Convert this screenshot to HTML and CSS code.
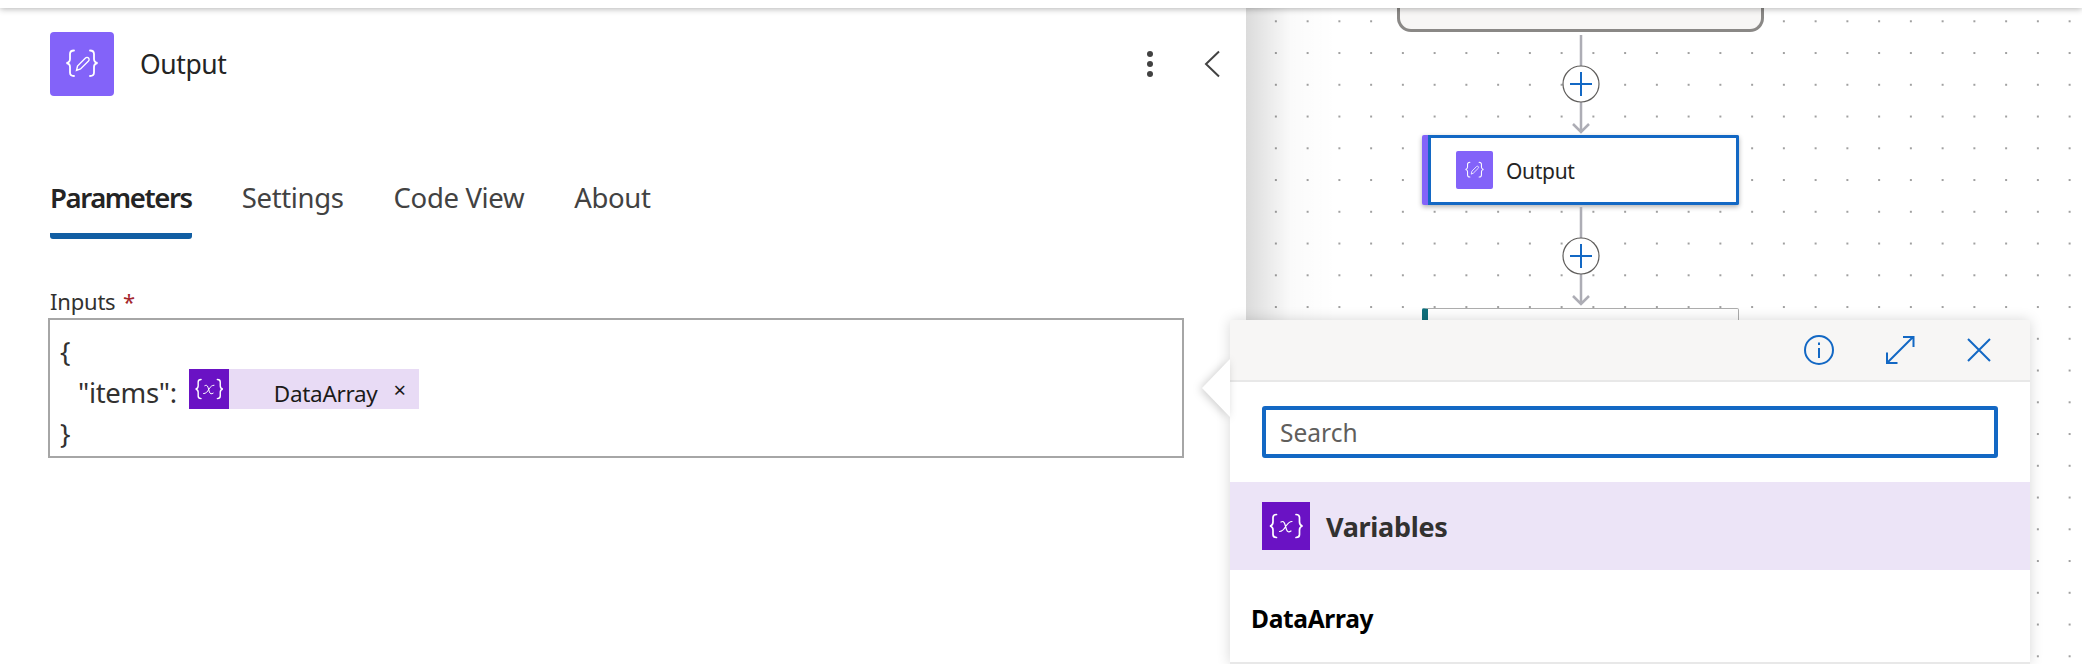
FILE: index.html
```html
<!DOCTYPE html>
<html lang="en">
<head>
  <meta charset="UTF-8"/>
  <title>Output</title>
  <link rel="stylesheet" href="styles.css">
</head>
<body>
  <svg class="defs" width="0" height="0">
    <symbol id="ico-compose" viewBox="0 0 64 64">
      <g fill="none" stroke="#fff" stroke-width="1.800" stroke-linecap="round">
        <path d="M24 18.500c-3 0-4 1-4 3.500v5c0 2.500-1 3.500-3.500 4 2.500.5 3.500 1.500 3.500 4v5.500c0 2.500 1 3.500 4 3.500"/>
        <path d="M40 18.500c3 0 4 1 4 3.500v5c0 2.500 1 3.500 3.500 4-2.500.5-3.500 1.500-3.500 4v5.500c0 2.500-1 3.500-4 3.500"/>
        <path stroke-width="1.400" d="M26.500 38.500l1-4.500 8-8c1-1 2.500-.5 3 0s1 2 0 3l-8 8z"/>
      </g>
    </symbol>
    <symbol id="ico-var" viewBox="0 0 48 48">
      <g fill="none" stroke="#fff" stroke-linecap="round">
        <path stroke-width="1.700" d="M14.500 12.500c-2.500 0-3.500 1-3.500 3v4.500c0 2.500-1 3.500-3 4 2 .5 3 1.500 3 4v4.500c0 2 1 3 3.500 3"/>
        <path stroke-width="1.700" d="M34 12.500c2.500 0 3.500 1 3.500 3v4.500c0 2.500 1 3.500 3 4-2 .5-3 1.500-3 4v4.500c0 2-1 3-3.500 3"/>
        <path stroke-width="1.200" d="M19 20c2-1 3-.5 3.800 2l1.700 5.500c.8 2.500 2.300 3 4.500 1.500M30 19.500c-2.500 0-4 1.500-6 4.500-2 3.500-3.500 5.500-6.500 5.500"/>
      </g>
    </symbol>
  </svg>

  <div class="topbar"></div>

  <div class="app">
    <!-- Panel de la izquierda -->
    <section class="panel">
      <header class="panel-head">
        <span class="op-icon op-icon-lg"><svg><use href="#ico-compose"/></svg></span>
        <h1 class="panel-title">Output</h1>
        <button class="head-btn btn-more" aria-label="More">
          <svg width="10" height="26" viewBox="0 0 10 26"><circle cx="5" cy="3" r="3" fill="#424242"/><circle cx="5" cy="13" r="3" fill="#424242"/><circle cx="5" cy="23" r="3" fill="#424242"/></svg>
        </button>
        <button class="head-btn btn-collapse" aria-label="Collapse">
          <svg width="16" height="28" viewBox="0 0 16 28"><path d="M15 1.500L2 14l13 12.500" fill="none" stroke="#424242" stroke-width="2"/></svg>
        </button>
      </header>

      <nav class="tabs">
        <a class="tab active">Parameters</a>
        <a class="tab">Settings</a>
        <a class="tab">Code View</a>
        <a class="tab">About</a>
      </nav>

      <label class="field-label">Inputs <span class="req">*</span></label>
      <div class="editor">
        <div class="line">{</div>
        <div class="line line-indent">
          <span>"items":</span>
          <span class="chip">
            <span class="chip-icon"><svg><use href="#ico-var"/></svg></span>
            <span class="chip-text">DataArray</span>
            <span class="chip-x">×</span>
          </span>
        </div>
        <div class="line">}</div>
      </div>
    </section>

    <!-- Lienzo -->
    <section class="canvas">
      <div class="flow">
        <div class="node-top"></div>
        <svg class="edge" width="40" height="100" viewBox="0 0 40 100">
          <path d="M20 0v97M12 89l8 8 8-8" fill="none" stroke="#adadb5" stroke-width="2.500"/>
          <circle cx="20" cy="49" r="18" fill="#fff" stroke="#605e5c" stroke-width="1.200"/>
          <path d="M20 37v24M9 49h22" fill="none" stroke="#1368c4" stroke-width="2"/>
        </svg>
        <div class="node node-selected">
          <span class="op-icon op-icon-sm"><svg><use href="#ico-compose"/></svg></span>
          <span class="node-label">Output</span>
        </div>
        <svg class="edge edge-low" width="40" height="100" viewBox="0 0 40 100">
          <path d="M20 0v97M12 89l8 8 8-8" fill="none" stroke="#adadb5" stroke-width="2.500"/>
          <circle cx="20" cy="49" r="18" fill="#fff" stroke="#605e5c" stroke-width="1.200"/>
          <path d="M20 37v24M9 49h22" fill="none" stroke="#1368c4" stroke-width="2"/>
        </svg>
        <div class="node node-next"></div>
      </div>
    </section>
  </div>

  <!-- Selector de contenido dinamico -->
  <aside class="popup">
    <svg class="popup-tail" width="28" height="58" viewBox="0 0 28 58"><path d="M28 0L0 29l28 29z" fill="#fff"/></svg>
    <div class="popup-head">
      <svg width="30" height="30" viewBox="0 0 30 30" fill="none" stroke="#1368c4" stroke-width="2"><circle cx="15" cy="15" r="14"/><path d="M15 13v10M15 7.500v2.500"/></svg>
      <svg width="30" height="30" viewBox="0 0 30 30" fill="none" stroke="#1368c4" stroke-width="2"><path d="M2 28L28 2M18 2h10.500v10M2 17.500V28h10.500"/></svg>
      <svg width="26" height="26" viewBox="0 0 26 26" fill="none" stroke="#1368c4" stroke-width="2"><path d="M2 2l22 22M24 2L2 24"/></svg>
    </div>
    <div class="search-wrap">
      <input class="search" placeholder="Search"/>
    </div>
    <div class="group-row">
      <span class="group-icon"><svg><use href="#ico-var"/></svg></span>
      <span class="group-name">Variables</span>
    </div>
    <div class="item-row">DataArray</div>
  </aside>
</body>
</html>
```

FILE: styles.css
```css
/* Reset */
* { box-sizing: border-box; margin: 0; padding: 0; }
html, body {
  width: 100%; height: 100%;
  overflow: hidden; background: #fff;
  font-family: 'Noto Sans', 'Open Sans', sans-serif;
  color: #242424;
}
.defs { position: absolute; }
button { border: none; background: none; display: flex; }

.topbar {
  position: relative; z-index: 3;
  height: 8px; background: #fff;
  box-shadow: 0 1px 6px rgba(0, 0, 0, .3);
}
.app { display: flex; height: 656px; }

/* Panel */
.panel { flex: 0 0 1246px; padding: 24px 26px 0 50px; background: #fff; }
.panel-head { display: flex; align-items: center; height: 64px; }
.op-icon { display: block; background: #8363f9; }
.op-icon svg { display: block; width: 100%; height: 100%; }
.op-icon-lg { width: 64px; height: 64px; border-radius: 4px; }
.op-icon-sm { width: 37px; height: 38px; border-radius: 2px; }
.panel-title { margin-left: 26px; font-size: 26.500px; font-weight: 400; letter-spacing: -.4px; }
.btn-more { margin-left: auto; margin-right: -2px; }
.btn-collapse { margin-left: 51px; }

.tabs { display: flex; gap: 50px; margin-top: 84px; }
.tab {
  padding-bottom: 17px;
  border-bottom: 6px solid transparent;
  font-size: 27.500px; line-height: 36px;
  letter-spacing: -.35px; color: #424242;
}
.tab.active {
  font-weight: 600; color: #242424; letter-spacing: -1.400px;
  border-radius: 0 0 3px 3px; border-bottom-color: #115ea3;
}

.field-label { display: block; margin-top: 49px; font-size: 22px; line-height: 26px; color: #323130; letter-spacing: -.2px; }
.req { color: #a4262c; margin-left: 2px; }
.editor {
  width: 1136px; height: 140px;
  margin: 4px 0 0 -2px;
  padding: 11px 10px 0;
  border: 2px solid #a6a6a6;
  font-size: 27.500px; color: #323130;
}
.line { display: flex; height: 41px; align-items: center; letter-spacing: -.3px; }
.line-indent { padding-left: 18px; }
.chip {
  display: flex; align-self: flex-start;
  width: 230px; height: 40px;
  margin: -3px 0 0 12px;
  background: #e8dbf5;
  font-size: 22.500px; line-height: 40px; color: #1b1a19;
}
.chip-icon { width: 40px; height: 40px; background: #6a12c4; }
.chip-icon svg { display: block; width: 100%; height: 100%; }
.chip-text { margin-left: 45px; padding-top: 5px; }
.chip-x { margin-left: 16px; font-size: 22px; }

/* Lienzo */
.canvas {
  flex: 1;
  background:
    linear-gradient(90deg, rgba(0, 0, 0, .14), rgba(0, 0, 0, .02) 45px, rgba(0, 0, 0, 0) 90px),
    radial-gradient(circle, #a0a0a0 .7px, rgba(255, 255, 255, 0) 1.100px) 14px -2.600px / 31.75px 31.75px,
    #fff;
}
.flow { display: flex; flex-direction: column; align-items: center; width: 367px; margin-left: 151px; }
.node-top {
  width: 100%; height: 24px;
  background: #f7f6f5;
  border: 3px solid #8a8886; border-top: none;
  border-radius: 0 0 14px 14px;
}
.edge { display: block; margin: 3px 0 0; }
.edge-low { margin: 2px 0 0; }
.node {
  display: flex; align-items: center;
  width: 317px; background: #fff;
  border-left: 6px solid #8363f9;
  border-radius: 2px;
}
.node-selected {
  height: 70px;
  padding-left: 28px;
  box-shadow: inset 3px 0 #1368c4, inset -3px 0 #1368c4, inset 0 3px #1368c4, inset 0 -3px #1368c4, 0 2px 5px rgba(0, 0, 0, .3);
}
.node-label { margin-left: 13px; padding-top: 2px; font-size: 21px; letter-spacing: -.3px; }
.node-next {
  height: 60px; margin-top: 1px;
  border: 1px solid #adadad;
  border-left: 6px solid #0f6f7b;
}

/* Popup */
.popup {
  position: absolute; z-index: 2;
  left: 1230px; top: 320px;
  width: 800px; height: 344px;
  background: #fff;
  border-bottom: 2px solid #e8e8e8;
  border-radius: 4px 4px 0 0;
  box-shadow: 0 0 14px rgba(0, 0, 0, .16);
}
.popup-tail {
  position: absolute; left: -28px; top: 39px;
  filter: drop-shadow(-2px 1px 4px rgba(0, 0, 0, .2));
}
.popup-head {
  display: flex; align-items: center; justify-content: flex-end;
  gap: 51px; height: 62px;
  padding-right: 38px;
  background: #f7f6f5;
  border-bottom: 2px solid #e8e8e8;
}
.search-wrap { padding: 24px 32px; }
.search {
  display: block; width: 100%; height: 52px;
  padding: 0 14px;
  border: 4px solid #1368c4; border-radius: 3px;
  outline: none;
  font: 24.500px 'Noto Sans', sans-serif;
}
.search::placeholder { color: #605e5c; opacity: 1; }
.group-row {
  display: flex; align-items: center;
  height: 88px; padding-left: 32px;
  background: #ece4f7;
}
.group-icon { width: 48px; height: 48px; background: #6a12c4; }
.group-icon svg { display: block; width: 100%; height: 100%; }
.group-name { margin-left: 16px; font-size: 27px; font-weight: 700; color: #323130; letter-spacing: -.3px; }
.item-row { padding: 31px 21px 0; font-size: 24.500px; line-height: 36px; font-weight: 700; color: #000; letter-spacing: -.3px; }
```
